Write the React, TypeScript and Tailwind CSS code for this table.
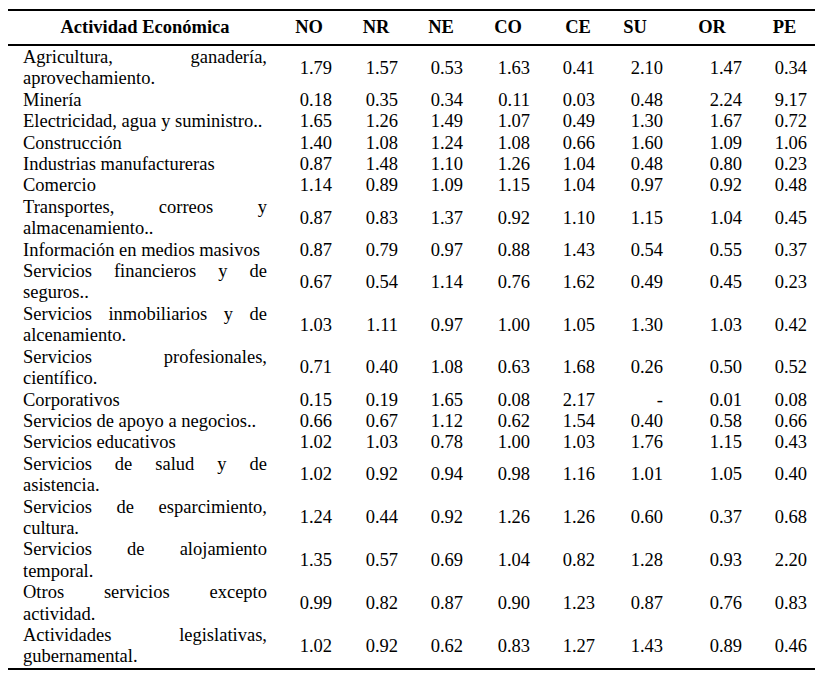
const headers = [
  { label: "NO", cls: "pr-[4px]" },
  { label: "NR", cls: "pl-[6px]" },
  { label: "NE", cls: "pl-[5px]" },
  { label: "CO", cls: "pl-[7px]" },
  { label: "CE", cls: "pl-[15px]" },
  { label: "SU", cls: "pr-[4px]" },
  { label: "OR", cls: "pl-[3px]" },
  { label: "PE", cls: "pl-[4px]" },
];

type Row = { name: string | [string, string]; values: string[] };

const rows: Row[] = [
  { name: ["Agricultura, ganadería,", "aprovechamiento."], values: ["1.79", "1.57", "0.53", "1.63", "0.41", "2.10", "1.47", "0.34"] },
  { name: "Minería", values: ["0.18", "0.35", "0.34", "0.11", "0.03", "0.48", "2.24", "9.17"] },
  { name: "Electricidad, agua y suministro..", values: ["1.65", "1.26", "1.49", "1.07", "0.49", "1.30", "1.67", "0.72"] },
  { name: "Construcción", values: ["1.40", "1.08", "1.24", "1.08", "0.66", "1.60", "1.09", "1.06"] },
  { name: "Industrias manufactureras", values: ["0.87", "1.48", "1.10", "1.26", "1.04", "0.48", "0.80", "0.23"] },
  { name: "Comercio", values: ["1.14", "0.89", "1.09", "1.15", "1.04", "0.97", "0.92", "0.48"] },
  { name: ["Transportes, correos y", "almacenamiento.."], values: ["0.87", "0.83", "1.37", "0.92", "1.10", "1.15", "1.04", "0.45"] },
  { name: "Información en medios masivos", values: ["0.87", "0.79", "0.97", "0.88", "1.43", "0.54", "0.55", "0.37"] },
  { name: ["Servicios financieros y de", "seguros.."], values: ["0.67", "0.54", "1.14", "0.76", "1.62", "0.49", "0.45", "0.23"] },
  { name: ["Servicios inmobiliarios y de", "alcenamiento."], values: ["1.03", "1.11", "0.97", "1.00", "1.05", "1.30", "1.03", "0.42"] },
  { name: ["Servicios profesionales,", "científico."], values: ["0.71", "0.40", "1.08", "0.63", "1.68", "0.26", "0.50", "0.52"] },
  { name: "Corporativos", values: ["0.15", "0.19", "1.65", "0.08", "2.17", "-", "0.01", "0.08"] },
  { name: "Servicios de apoyo a negocios..", values: ["0.66", "0.67", "1.12", "0.62", "1.54", "0.40", "0.58", "0.66"] },
  { name: "Servicios educativos", values: ["1.02", "1.03", "0.78", "1.00", "1.03", "1.76", "1.15", "0.43"] },
  { name: ["Servicios de salud y de", "asistencia."], values: ["1.02", "0.92", "0.94", "0.98", "1.16", "1.01", "1.05", "0.40"] },
  { name: ["Servicios de esparcimiento,", "cultura."], values: ["1.24", "0.44", "0.92", "1.26", "1.26", "0.60", "0.37", "0.68"] },
  { name: ["Servicios de alojamiento", "temporal."], values: ["1.35", "0.57", "0.69", "1.04", "0.82", "1.28", "0.93", "2.20"] },
  { name: ["Otros servicios excepto", "actividad."], values: ["0.99", "0.82", "0.87", "0.90", "1.23", "0.87", "0.76", "0.83"] },
  { name: ["Actividades legislativas,", "gubernamental."], values: ["1.02", "0.92", "0.62", "0.83", "1.27", "1.43", "0.89", "0.46"] },
];

const cols = "grid grid-cols-[274px_58px_66px_65px_67px_65px_68px_79px_65px]";

const App = () => {
  return (
    <div className="min-h-[678px] w-[827px] bg-white pt-[9px] pl-[8px] font-[family-name:Liberation_Serif,Times_New_Roman,serif] text-[18.5px] leading-[21.4px] text-black">
      <div className="w-[807px]">
        {/* encabezado */}
        <div className={`${cols} h-[37px] items-center border-y-2 border-black font-bold`}>
          <div className="text-center">Actividad Económica</div>
          {headers.map((h) => (
            <div key={h.label} className={`text-center ${h.cls}`}>
              {h.label}
            </div>
          ))}
        </div>

        {/* cuerpo */}
        <div className="border-b-2 border-black pt-[1px]">
          {rows.map((r, i) => (
            <div key={i} className={`${cols} items-center`}>
              <div className="pl-[15px] pr-[15px]">
                {Array.isArray(r.name) ? (
                  <>
                    <div className="text-justify [text-align-last:justify]">{r.name[0]}</div>
                    <div className="whitespace-nowrap">{r.name[1]}</div>
                  </>
                ) : (
                  <div className="whitespace-nowrap">{r.name}</div>
                )}
              </div>
              {r.values.map((v, j) => (
                <div key={j} className="pr-[8px] text-right">
                  {v}
                </div>
              ))}
            </div>
          ))}
        </div>
      </div>
    </div>
  );
};

export default App;
